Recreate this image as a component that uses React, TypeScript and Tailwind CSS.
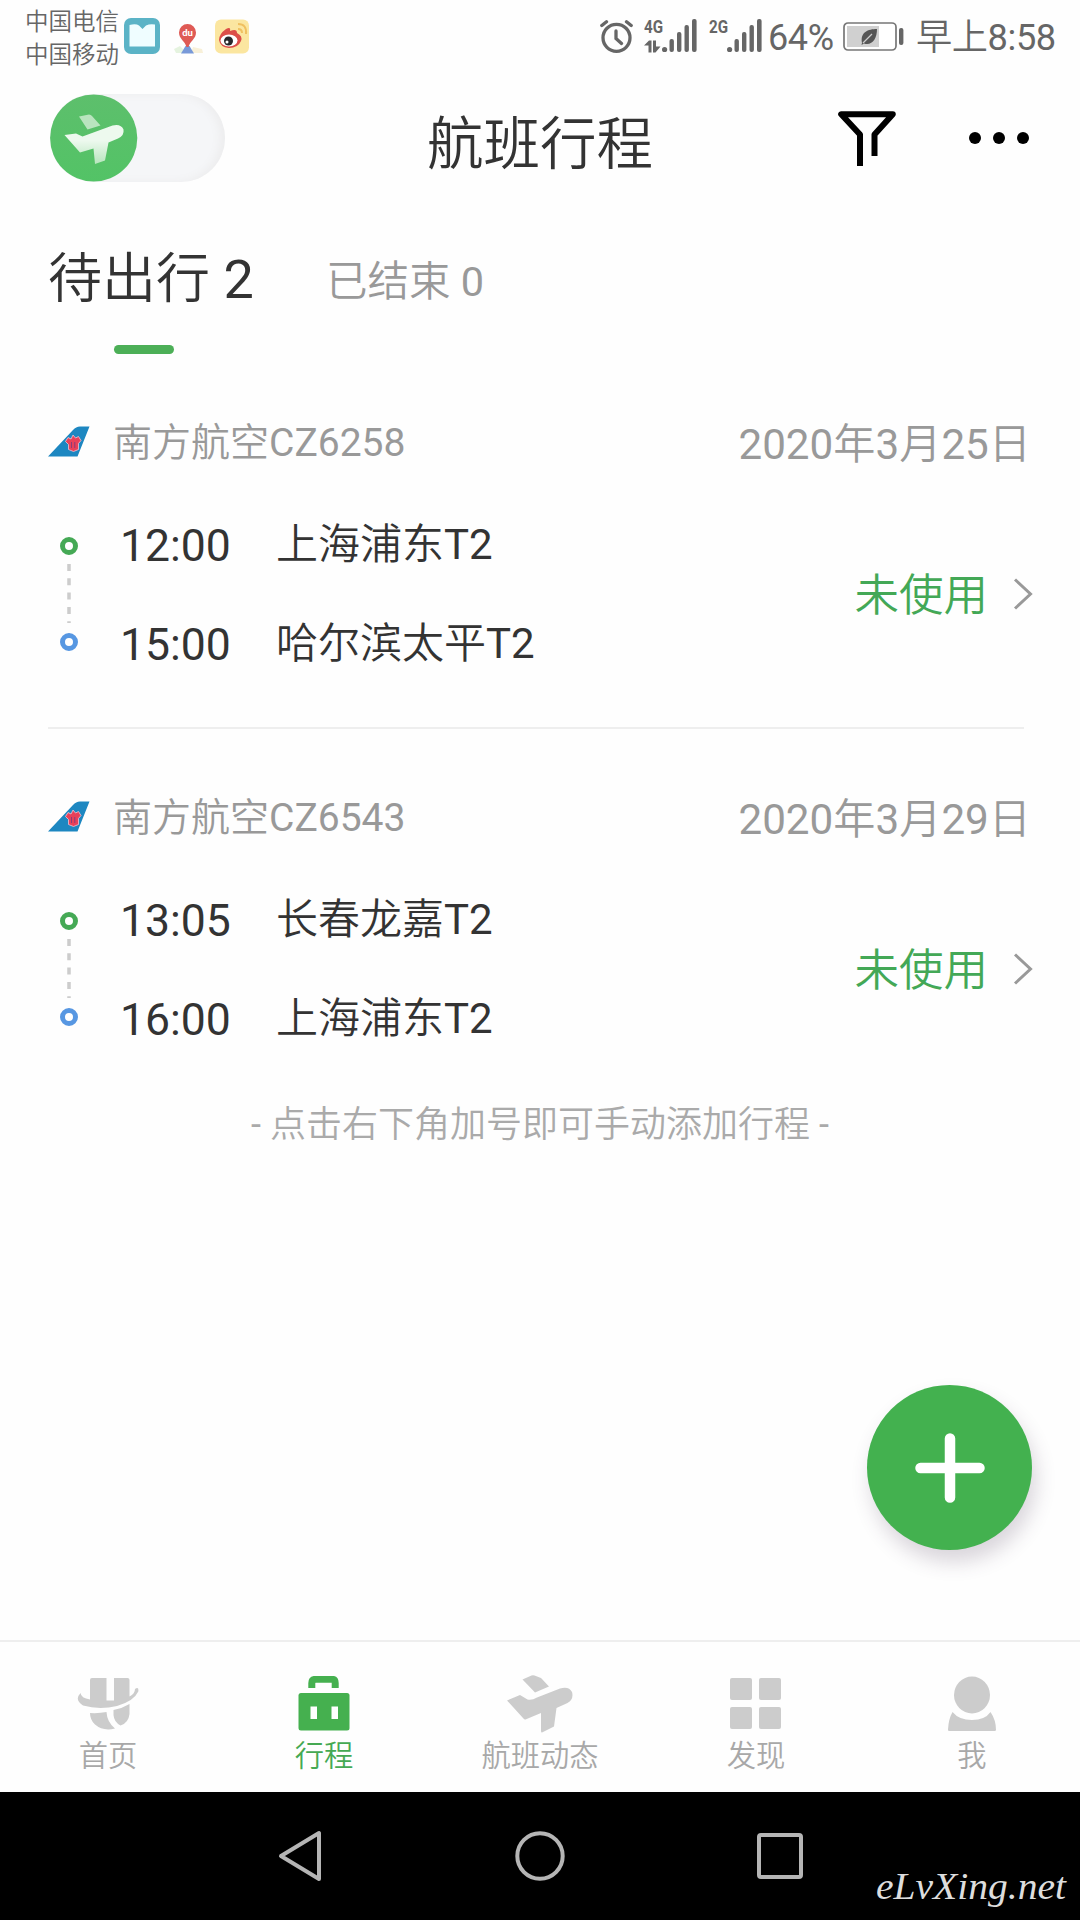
import React from "react";

const FONT =
  "font-['Roboto','Noto_Sans_CJK_SC_DemiLight','Noto_Sans_CJK_SC',sans-serif]";

function PlaneShape({ fill, bodyFill }: { fill: string; bodyFill: string }) {
  return (
    <>
      <path d="M15 2.500 L25 .5 Q27 .5 28 2 L36.500 11.500 L23.500 15.500 Z" fill={fill} />
      <path
        d="M.5 21 L12 19.500 L18.500 22.500 L48.500 11.500 Q57 9.500 59.500 15.500 Q60.500 21.500 54 24.500 L44.500 28.500 L41 46.500 L31 50 L29.500 34.500 L16 38.500 Z"
        fill={bodyFill}
      />
    </>
  );
}

function SignalBars() {
  return (
    <svg width="35" height="34" viewBox="0 0 35 34" fill="#666">
      <circle cx="2.600" cy="30.500" r="2.600" />
      <rect x="7.500" y="20" width="4.400" height="13" rx="2" />
      <rect x="15" y="13" width="4.400" height="20" rx="2" />
      <rect x="22.500" y="6" width="4.400" height="27" rx="2" />
      <rect x="30" y="0" width="4.600" height="33" rx="2" />
    </svg>
  );
}

function Network({ label, arrows }: { label: string; arrows?: boolean }) {
  return (
    <div className="flex h-[34px] w-[53px] items-start">
      <div className="flex w-[18px] flex-col">
        <span className="origin-left scale-x-[.8] text-[19px] leading-[16px] font-bold text-[#666]">{label}</span>
        {arrows && (
          <svg className="mt-[5px]" width="17" height="13" viewBox="0 0 17 13" fill="#666">
            <path d="M0 5.500 L5 .5 H7.500 V12.500 H4.500 V5.500 Z M9 .5 H12 V6.500 H16.500 L11.500 12.500 H9 Z" />
          </svg>
        )}
      </div>
      <SignalBars />
    </div>
  );
}

function StatusBar() {
  return (
    <div className="flex h-[72px] items-start text-[#666]">
      <div className="ml-[25px] w-[99px] pt-[6px] text-[23.500px] leading-[33px]">
        <div>中国电信</div>
        <div>中国移动</div>
      </div>
      <svg className="mt-[18px]" width="36" height="36" viewBox="0 0 36 36">
        <rect width="36" height="36" rx="7" fill="#5bb3c6" />
        <path d="M5.500 7 Q12 5.500 15 7.500 L18.500 11 L22 7.500 Q26 5.500 31 6.500 V28.500 H5.500 Z" fill="#effdff" />
      </svg>
      <svg className="mt-[22px] ml-[11px]" width="34" height="33" viewBox="0 0 34 33">
        <path d="M3 27 L9 24 L16 31 L5 31 Z" fill="#e5f3df" />
        <path d="M22 25 L31 27 L32 31 L20 31 Z" fill="#f8f0d8" />
        <path d="M10 31.500 L14.500 24 H18.500 L23 31.500 Z" fill="#7899d8" />
        <path d="M16.500 2 A8.500 8.500 0 0 1 25 10.500 C25 17 19 19 17.500 25 H15.500 C14 19 8 17 8 10.500 A8.500 8.500 0 0 1 16.500 2 Z" fill="#df5a55" />
        <text x="16.500" y="14" textAnchor="middle" fontSize="9.500" fontWeight="700" fontFamily="Roboto" fill="#fff">du</text>
      </svg>
      <svg className="mt-[19px] ml-[10px]" width="35" height="35" viewBox="0 0 35 35">
        <rect y=".5" width="34" height="34" rx="6" fill="#fbe6a0" />
        <path d="M23 5 Q32 5 31 15 M23 10 Q27 10 27 14" fill="none" stroke="#f0c060" strokeWidth="2" />
        <path d="M4 21 Q4 15 11 10 Q16 7 15 12 Q22 9 22 14 Q28 17 26 22 Q23 29 14 29 Q5 28 4 21 Z" fill="#dc4e48" />
        <ellipse cx="14" cy="21.500" rx="8.500" ry="6" fill="#fff" />
        <circle cx="13.500" cy="22" r="4.500" fill="#27282c" />
        <circle cx="12" cy="23" r="1.500" fill="#fff" />
      </svg>
      <div className="flex-1" />
      <svg className="mt-[19px] mr-[10px]" width="34" height="35" viewBox="0 0 34 35" fill="none" stroke="#666" strokeWidth="3.300" strokeLinecap="round">
        <circle cx="16.500" cy="18.800" r="13.500" />
        <path d="M16 12 V19.500 L21.500 24.500 M1.800 6.500 L6.500 2.700 M26.500 2.700 L31.200 6.500" />
      </svg>
      <div className="mt-[19px] mr-[12px]"><Network label="4G" arrows /></div>
      <div className="mt-[19px] mr-[6px]"><Network label="2G" /></div>
      <div className="mt-[18px] mr-[9px] w-[66px] text-[36px] leading-10 tracking-[-.4px]">64%</div>
      <svg className="mt-[22px] mr-[12px]" width="61" height="29" viewBox="0 0 61 29">
        <rect x="1" y="1" width="52" height="27" rx="4" fill="#fff" stroke="#777" strokeWidth="1.700" />
        <rect x="4" y="4" width="32" height="21" fill="#d0d0d0" />
        <path d="M19 21 C17 10 25 7 34 7 C34 17 29 24 21 21.500 L18.500 23 Z" fill="#555" />
        <path d="M20 21 L29 12" stroke="#ccc" strokeWidth="1.200" />
        <rect x="56" y="6" width="4.400" height="17" rx="2" fill="#666" />
      </svg>
      <div className="mt-[18px] w-[164px] text-[36.200px] leading-10 tracking-[-.4px] whitespace-nowrap">早上8:58</div>
    </div>
  );
}

function Header() {
  return (
    <div className="grid h-[132px] grid-cols-3 items-center">
      <div className="ml-[50px] h-[88px] w-[175px] rounded-full bg-[#f5f6f8] shadow-[inset_-5px_0_8px_#ededee]">
        <svg width="88" height="88" viewBox="0 0 88 88">
          <defs>
            <linearGradient id="toggleGreen" x1="0" y1="0" x2="0" y2="1">
              <stop offset="0" stopColor="#5dbf6c" />
              <stop offset="1" stopColor="#53c366" />
            </linearGradient>
            <linearGradient id="planeFade" x1="0" y1="0" x2="0" y2="1">
              <stop offset=".4" stopColor="#edf9ee" />
              <stop offset="1" stopColor="#b7e5bd" />
            </linearGradient>
          </defs>
          <circle cx="43.700" cy="44" r="43.600" fill="url(#toggleGreen)" />
          <g transform="translate(14 20)">
            <PlaneShape fill="#b9e4be" bodyFill="url(#planeFade)" />
          </g>
        </svg>
      </div>
      <h1 className="pt-[13px] text-center text-[56.500px] leading-[64px] whitespace-nowrap text-[#333]">航班行程</h1>
      <div className="flex items-center justify-end pr-[51px]">
        <svg className="mr-[73px]" width="58" height="55" viewBox="0 0 58 55" fill="none" stroke="#000" strokeWidth="6" strokeLinejoin="round">
          <path d="M22 55 V23.500 L3.200 3.200 H54.800 L36.500 23.500 V45" />
        </svg>
        <div className="flex gap-3">
          <i className="size-3 rounded-full bg-black" />
          <i className="size-3 rounded-full bg-black" />
          <i className="size-3 rounded-full bg-black" />
        </div>
      </div>
    </div>
  );
}

function Tabs() {
  return (
    <div className="flex h-[196px] pl-[48px] whitespace-nowrap">
      <div className="w-[278px]">
        <div className="pt-[44px] text-[54px] leading-[64px] text-[#333]">待出行 2</div>
        <div className="mt-[33px] ml-[66px] h-[9px] w-[60px] rounded-full bg-[#4caf57]" />
      </div>
      <div className="pt-[46px] text-[41.500px] leading-[64px] text-[#999]">已结束 0</div>
    </div>
  );
}

function AirlineTail() {
  return (
    <svg className="-mt-[2px]" width="42" height="31" viewBox="0 0 42 31">
      <path d="M0 30.500 L25 4 Q28 .5 32 .5 H41.500 L29.500 30.500 Z" fill="#1d87c1" />
      <g fill="#e8415a" stroke="#f3c3d3" strokeWidth=".8">
        <path d="M25 9 l2.500 3 l3 -1.500 l2.500 4 l-2.500 3 v6 l-5 2 l-5 -2 v-5 l-3 -3 l2.500 -4 l3 1.500 Z" />
      </g>
      <path d="M23.500 16 v6 M26.800 16 v6" stroke="#8a3d78" strokeWidth="1" />
    </svg>
  );
}

type Flight = {
  code: string;
  date: string;
  legs: [string, string][];
};

const FLIGHTS: Flight[] = [
  { code: "南方航空CZ6258", date: "2020年3月25日", legs: [["12:00", "上海浦东T2"], ["15:00", "哈尔滨太平T2"]] },
  { code: "南方航空CZ6543", date: "2020年3月29日", legs: [["13:05", "长春龙嘉T2"], ["16:00", "上海浦东T2"]] },
];

function FlightCard({ flight }: { flight: Flight }) {
  return (
    <section className="whitespace-nowrap">
      <div className="flex h-[84px] items-center pr-[49px] pl-[48px] text-[#999]">
        <AirlineTail />
        <span className="ml-[23px] pt-[2px] text-[39px] leading-[48px]">{flight.code}</span>
        <span className="ml-auto pt-[6px] text-[42.200px] leading-[48px]">{flight.date}</span>
      </div>
      <div className="mt-[11px] flex h-[198px] items-center pr-[47px] pl-[59px]">
        <svg width="20" height="116" viewBox="0 0 20 116" fill="#fff">
          <path d="M10 28 V87" stroke="#ccc" strokeWidth="3.500" strokeDasharray="7 7.300" />
          <circle cx="10" cy="10" r="6.500" stroke="#45a955" strokeWidth="5" />
          <circle cx="10" cy="106" r="6.500" stroke="#5797e2" strokeWidth="5" />
        </svg>
        <div className="ml-[41px] flex-1 text-[#333]">
          {flight.legs.map(([time, place]) => (
            <div key={time} className="flex h-[99px] items-center">
              <span className="w-[156px] pt-[3px] text-[44.500px] leading-[52px]">{time}</span>
              <span className="text-[42px] leading-[52px]">{place}</span>
            </div>
          ))}
        </div>
        <span className="pt-[4px] text-[44.500px] leading-[52px] text-[#43a856]">未使用</span>
        <svg className="ml-[25px]" width="20" height="32" viewBox="0 0 20 32" fill="none" stroke="#999" strokeWidth="3">
          <path d="M2 1.500 L17.500 16 L2 30.500" />
        </svg>
      </div>
    </section>
  );
}

function HomeIcon() {
  return (
    <svg width="62" height="56" viewBox="0 0 62 56" fill="#ccc">
      <path d="M13 4 Q13 2 15 2 H29.500 V24.500 H37 V2 H50.500 Q52.500 2 52.500 4 V20.500 Q58 17.500 58 13 Q62 10 61.300 15.500 Q57 25 40 30 Q22 34 6 29.500 Q-3 24 3.500 17 Q4 22 13 23.500 Z" />
      <path d="M13 37 Q22 37.500 29.500 36 Q30 46 38 52.500 Q26 55.500 18 48.500 Q13 44 13 37 Z" />
      <path d="M36.500 34 Q45 32.500 52.500 28 V38 Q51.500 47 43.500 49.500 Q37 46 36.500 39 Z" />
    </svg>
  );
}

function TripIcon() {
  return (
    <svg width="52" height="56" viewBox="0 0 52 56">
      <path d="M13.800 12 V7 Q13.800 3.300 18 3.300 H34 Q37.200 3.300 37.200 7 V12" fill="none" stroke="#45b04f" strokeWidth="7" />
      <rect x=".5" y="17" width="51" height="37.500" rx="2.500" fill="#45b04f" />
      <path d="M12.500 30.500 H19 V43 H12.500 Z M33.500 30.500 H40 V43 H33.500 Z" fill="#fff" />
    </svg>
  );
}

function StatusIcon() {
  return (
    <svg width="66" height="58" viewBox="0 0 66 58" fill="#ccc">
      <path d="M15.500 4.500 L24.500 .5 Q26 0 27.500 .5 L34 3 L42 11.500 L28 17.500 Z" />
      <path d="M0 25.500 L13 20 L20.500 24.500 Q25 25.500 30 22.500 L53 13.500 Q62 11 65 17 Q67 24 60.500 28 L49.500 33 L47 51.500 L35 57.500 Q34 57.500 34 56 V38 L18.500 44.500 Q17 44.500 16 43 Z" />
    </svg>
  );
}

function DiscoverIcon() {
  return (
    <div className="grid h-[52px] grid-cols-[22px_22px] grid-rows-[22px_22px] gap-[7px]">
      {[0, 1, 2, 3].map((n) => (
        <i key={n} className="rounded-[2px] bg-[#ccc]" />
      ))}
    </div>
  );
}

function MeIcon() {
  return (
    <svg width="48" height="56" viewBox="0 0 48 56" fill="#ccc">
      <ellipse cx="24" cy="19" rx="18" ry="18.500" />
      <path d="M4.500 36 Q11 44 24 44 Q37 44 42.500 36 Q48 44 48 54 Q48 55 46.500 55 H1 Q0 55 0 53.500 Q.5 43 4.500 36 Z" />
    </svg>
  );
}

const NAV = [
  { label: "首页", icon: <HomeIcon /> },
  { label: "行程", icon: <TripIcon />, active: true },
  { label: "航班动态", icon: <StatusIcon /> },
  { label: "发现", icon: <DiscoverIcon /> },
  { label: "我", icon: <MeIcon /> },
];

function BottomNav() {
  return (
    <nav className="grid h-[152px] grid-cols-5 border-t-2 border-[#eee]">
      {NAV.map((item) => (
        <div key={item.label} className="flex flex-col items-center pt-[33px]">
          <div className="flex h-[58px] items-center pr-px">{item.icon}</div>
          <div className={item.active ? "mt-[5px] text-[29.300px] leading-9 text-[#45a953]" : "mt-[5px] text-[29.300px] leading-9 text-[#a8a8a8]"}>
            {item.label}
          </div>
        </div>
      ))}
    </nav>
  );
}

function SystemBar() {
  return (
    <div className="relative flex h-32 items-center justify-center bg-black">
      <div className="flex w-full items-center pl-[278px]">
        <svg width="44" height="52" viewBox="0 0 44 52" fill="none" stroke="#b5b5b5" strokeWidth="4" strokeLinejoin="round">
          <path d="M41 3 V49 L3 26 Z" />
        </svg>
        <svg className="ml-[193px]" width="50" height="50" viewBox="0 0 50 50" fill="none" stroke="#b5b5b5" strokeWidth="4">
          <circle cx="25" cy="25" r="22.700" />
        </svg>
        <div className="ml-[192px] h-[46px] w-[46px] rounded-[4px] border-4 border-[#b5b5b5]" />
      </div>
      <svg className="absolute right-[7px] bottom-[5px]" width="200" height="50" viewBox="0 0 200 50">
        <text
          x="3"
          y="34"
          textLength="190"
          lengthAdjust="spacingAndGlyphs"
          fontSize="38"
          fontStyle="italic"
          fontFamily="'Brush Script MT','Segoe Script','Liberation Serif',cursive"
          fill="#ddd"
        >
          eLvXing.net
        </text>
      </svg>
    </div>
  );
}

export default function App() {
  return (
    <div className={`${FONT} relative flex h-[1920px] w-[1080px] flex-col overflow-hidden bg-[#fefefe]`}>
      <StatusBar />
      <Header />
      <Tabs />
      <FlightCard flight={FLIGHTS[0]} />
      <div className="mt-[34px] mr-[56px] mb-[46px] ml-[48px] h-[2px] shrink-0 bg-[#eee]" />
      <FlightCard flight={FLIGHTS[1]} />
      <div className="h-[106px] pt-[4px] text-center text-[36px] leading-[106px] text-[#aaa]">- 点击右下角加号即可手动添加行程 -</div>
      <div className="flex-1" />
      <BottomNav />
      <SystemBar />
      <button className="absolute right-[48px] bottom-[370px] flex size-[165px] items-center justify-center rounded-full bg-[#43b14f] shadow-[4px_12px_20px_rgba(70,50,80,0.2)]">
        <svg width="70" height="70" viewBox="0 0 70 70" stroke="#fff" strokeWidth="10.500" strokeLinecap="round">
          <path d="M35 5.500 V64.500 M5.500 35 H64.500" />
        </svg>
      </button>
    </div>
  );
}
